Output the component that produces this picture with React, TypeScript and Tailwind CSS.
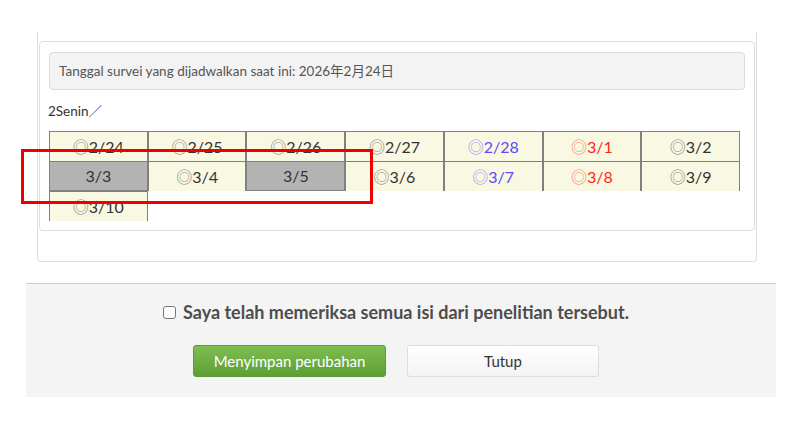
import React from 'react';

type Cell = { label: string; mark?: boolean; tone?: 'blue' | 'red'; off?: boolean };

const cells: Cell[] = [
  { label: '2/24', mark: true },
  { label: '2/25', mark: true },
  { label: '2/26', mark: true },
  { label: '2/27', mark: true },
  { label: '2/28', mark: true, tone: 'blue' },
  { label: '3/1', mark: true, tone: 'red' },
  { label: '3/2', mark: true },
  { label: '3/3', off: true },
  { label: '3/4', mark: true },
  { label: '3/5', off: true },
  { label: '3/6', mark: true },
  { label: '3/7', mark: true, tone: 'blue' },
  { label: '3/8', mark: true, tone: 'red' },
  { label: '3/9', mark: true },
  { label: '3/10', mark: true },
];

const DayCell: React.FC<{ cell: Cell }> = ({ cell }) => {
  const color =
    cell.tone === 'blue' ? 'text-[#6247ff]' : cell.tone === 'red' ? 'text-[#ff2a10]' : 'text-[#333]';
  const bg = cell.off ? 'bg-[#b3b3b3] border-b' : 'bg-[#f9f8e3]';
  return (
    <div
      className={`h-[30px] border-t border-l border-r border-[#808080] flex items-center justify-center text-[16px] ${bg} ${color}`}
    >
      {cell.mark && <span className="opacity-60">◎</span>}
      <span>{cell.label}</span>
    </div>
  );
};

export default function App() {
  return (
    <div
      className="relative w-[793px] h-[426px] bg-white overflow-hidden"
      style={{ fontFamily: 'Lato, "Noto Sans CJK JP", sans-serif' }}
    >
      <div className="pt-[32px] pl-[37px]">
        <div className="w-[720px] border-l border-r border-b border-[#ddd] rounded-b-[4px] pt-[9px] pl-[1px] pr-[1px] pb-[30px]">
          <div className="border border-[#ddd] rounded-[4px] px-[9px] pt-[10px] pb-[9px]">
            <div className="h-[38px] bg-[#f3f3f3] border border-[#ddd] rounded-[4px] flex items-center px-[9px] text-[13.5px] text-[#555]">
              Tanggal survei yang dijadwalkan saat ini: 2026年2月24日
            </div>
            <div className="mt-[13px] text-[13.5px] text-[#333] h-[16px] leading-[16px] -ml-[1px]">2Senin／</div>
            <div className="mt-[12px] w-[691px] grid grid-cols-7">
              {cells.map((c) => (
                <DayCell key={c.label} cell={c} />
              ))}
            </div>
          </div>
        </div>
      </div>

      <div className="mt-[21px] ml-[26px] w-[750px] h-[114px] bg-[#f4f4f4] border-t border-[#ccc] pr-[10px] flex flex-col items-center">
        <label className="mt-[15px] flex items-center gap-[7px] text-[18px] font-bold text-[#4d4d4d]">
          <span className="w-[13px] h-[13px] border border-[#767676] rounded-[3px] bg-white" />
          Saya telah memeriksa semua isi dari penelitian tersebut.
        </label>
        <div className="mt-[19px] flex gap-[21px]">
          <button className="w-[193px] h-[32px] rounded-[3px] border border-[#5b9a38] bg-gradient-to-b from-[#7fbf4f] to-[#5d9e36] text-white text-[15px]">
            Menyimpan perubahan
          </button>
          <button className="w-[192px] h-[32px] rounded-[3px] border border-[#ddd] bg-gradient-to-b from-white to-[#f3f3f3] text-[#333] text-[15px]">
            Tutup
          </button>
        </div>
      </div>

      <div className="absolute left-[21px] top-[149px] w-[352px] h-[55px] border-[3px] border-[#ee0000]" />
    </div>
  );
}
